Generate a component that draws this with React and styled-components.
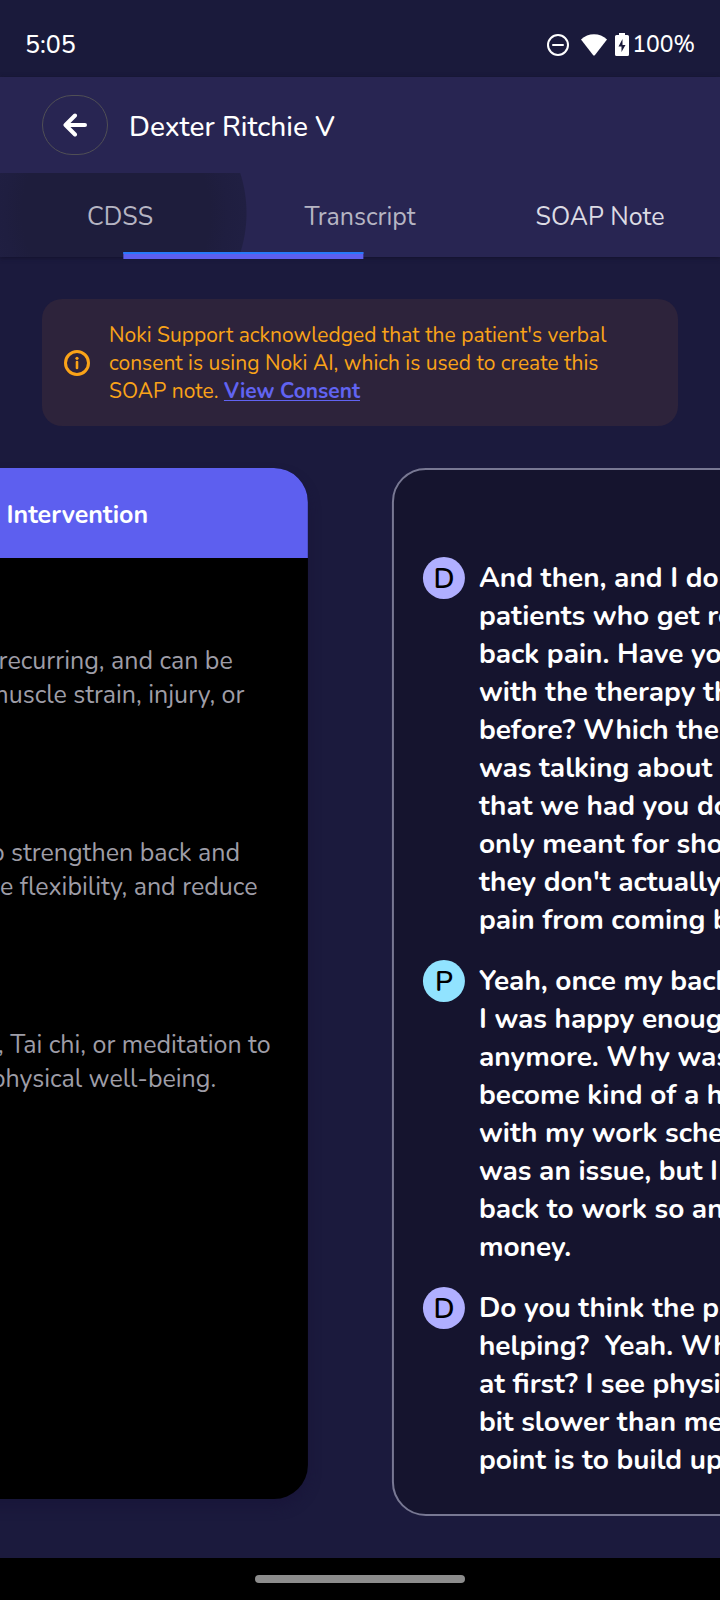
import React from "react";
import styled, { createGlobalStyle } from "styled-components";

const swipe = 0.514;

const GlobalStyle = createGlobalStyle`
  * { box-sizing: border-box; }
  body { margin: 0; background: #1b1a3d; }
  button { font: inherit; color: inherit; background: none; border: 0; padding: 0; cursor: pointer; }
  h1, h2, h3, p { margin: 0; }
`;

const Screen = styled.div`
  display: flex;
  flex-direction: column;
  min-height: 100vh;
  background: #1b1a3d;
  color: #fff;
  font-family: Nunito, Lato, "Open Sans", sans-serif;
  overflow: hidden;
`;

const StatusBar = styled.div`
  display: flex;
  align-items: center;
  justify-content: space-between;
  height: 77px;
  padding: 12px 25px 0;
  background: #1a1a3b;
  font-size: 25px;
  line-height: 30px;
  font-weight: 500;
`;

const StatusIcons = styled.div`
  display: flex;
  align-items: center;
`;

const BatteryLevel = styled.span`
  font-size: 23px;
`;

const StatusIcon = styled.svg`
  display: block;
  margin-right: ${(p) => p.$gap}px;
`;

const Header = styled.header`
  background: #282552;
  box-shadow: 0 1px 4px #14122c;
  position: relative;
`;

const AppBar = styled.div`
  display: flex;
  align-items: center;
  gap: 21px;
  height: 96px;
  padding: 0 42px;
`;

const BackButton = styled.button`
  display: flex;
  align-items: center;
  justify-content: center;
  width: 66px;
  height: 60px;
  border: 1px solid #504f55;
  border-radius: 30px;
`;

const PatientName = styled.h1`
  padding-top: 4px;
  font-size: 28px;
  line-height: 36px;
  font-weight: 500;
`;

const Tabs = styled.nav`
  position: relative;
  display: grid;
  grid-template-columns: repeat(3, 1fr);
  height: 84px;
`;

const Tab = styled.button`
  position: relative;
  font-size: 25px;
  line-height: 32px;
  padding-top: 4px;
  color: ${(p) => (p.$bright ? "#dcdbe3" : "#b6b5c3")};
`;

const TabLabel = styled.span`
  position: relative;
`;

const Ripple = styled.span`
  position: absolute;
  inset: 0 -8px 0 0;
  background: radial-gradient(
    circle at 116px 40px,
    #1e1d3c 0 94px,
    #1f1e40 112px,
    #201f42 130px,
    transparent 131px
  );
`;

const Indicator = styled.span`
  position: absolute;
  left: 0;
  bottom: -2px;
  width: calc(100% / 3);
  height: 7px;
  background: #5d5fef;
  border-top: 2px solid #2879fa;
`;

const Banner = styled.section`
  display: flex;
  align-items: center;
  gap: 18px;
  margin: 42px;
  padding: 22px 21px 21px;
  border-radius: 20px;
  background: #2d233b;
  color: #faa318;
`;

const InfoIcon = styled.svg`
  flex: none;
`;

const BannerText = styled.p`
  font-size: 21px;
  line-height: 28px;
`;

const ConsentLink = styled.a`
  color: #6163f2;
  font-weight: 700;
  text-decoration: underline;
  text-decoration-thickness: 1px;
  text-underline-offset: 2px;
`;

const Pager = styled.main`
  flex: 1;
  display: flex;
  padding-bottom: 42px;
`;

const Page = styled.div`
  display: flex;
  flex: 0 0 100%;
  min-width: 0;
  padding: 0 42px;
`;

const InterventionCard = styled.article`
  flex: 1;
  margin-bottom: 17px;
  border-radius: 34px;
  background: #000;
  overflow: hidden;
  box-shadow: 0 8px 12px #19163a;
`;

const CardTitle = styled.h2`
  padding: 29px 0 25px;
  background: #5d5fef;
  font-size: 25px;
  line-height: 36px;
  font-weight: 700;
  text-align: center;
`;

const Advice = styled.section`
  padding: 36px 0 0 49px;
  & + & { padding-top: 74px; }
`;

const AdviceTitle = styled.h3`
  font-size: 25px;
  line-height: 34px;
  font-weight: 700;
  margin-bottom: 16px;
`;

const AdviceLine = styled.p`
  font-size: 25px;
  line-height: 34px;
  color: #9e9da7;
  white-space: pre;
`;

const TranscriptCard = styled.article`
  flex: 1;
  min-width: 0;
  display: flex;
  flex-direction: column;
  gap: 21px;
  padding: 87px 29px 35px;
  border: 2px solid #787893;
  border-radius: 34px;
  background: #15142e;
  overflow: hidden;
`;

const Turn = styled.section`
  display: flex;
  align-items: flex-start;
  gap: 14px;
`;

const Speaker = styled.span`
  flex: none;
  width: 42px;
  height: 42px;
  border-radius: 50%;
  background: ${(p) => (p.$who === "D" ? "#b0afff" : "#91e3ff")};
  color: #000;
  font-size: 28px;
  line-height: 44px;
  font-weight: 600;
  text-align: center;
`;

const Speech = styled.p`
  padding-top: 2px;
  font-size: 28px;
  line-height: 38px;
  font-weight: 700;
  white-space: pre;
`;

const NavBar = styled.footer`
  display: flex;
  align-items: center;
  justify-content: center;
  height: 42px;
  background: #000;
`;

const HomeHandle = styled.span`
  width: 210px;
  height: 8px;
  border-radius: 4px;
  background: #8c8c8c;
`;

const advice = [
  {
    title: "Back Pain",
    lines: ["Lower back pain is often recurring, and can be", "caused by an event like muscle strain, injury, or"],
  },
  {
    title: "Exercise",
    lines: ["Begin physical therapy to strengthen back and", "key core muscles, improve flexibility, and reduce"],
  },
  {
    title: "Mind and Body",
    lines: ["Techniques such as yoga, Tai chi, or meditation to", "support the mental and physical well-being."],
  },
];

const turns = [
  {
    who: "D",
    lines: [
      "And then, and I do see",
      "patients who get recurring",
      "back pain. Have you done",
      "with the therapy that",
      "before? Which the doctor",
      "was talking about and",
      "that we had you do is",
      "only meant for short",
      "they don't actually stop",
      "pain from coming back.",
    ],
  },
  {
    who: "P",
    lines: [
      "Yeah, once my back felt",
      "I was happy enough not",
      "anymore. Why was it",
      "become kind of a hassle",
      "with my work schedule",
      "was an issue, but I got",
      "back to work so and",
      "money.",
    ],
  },
  {
    who: "D",
    lines: [
      "Do you think the pain",
      "helping?  Yeah. What",
      "at first? I see physical",
      "bit slower than medicine",
      "point is to build up your",
    ],
  },
];

export default function App() {
  return (
    <Screen>
      <GlobalStyle />
      <StatusBar>
        <span>5:05</span>
        <StatusIcons>
          <StatusIcon $gap={12} width="22" height="22" viewBox="0 0 22 22" aria-hidden="true">
            <circle cx="11" cy="11" r="10" fill="none" stroke="#fff" strokeWidth="2" />
            <path d="M6 11h10" stroke="#fff" strokeWidth="2" strokeLinecap="round" />
          </StatusIcon>
          <StatusIcon $gap={8} width="26" height="22" viewBox="0 0 26 22" aria-hidden="true">
            <path d="M0 5.5C7-1.6 19-1.6 26 5.5L13.8 21.2Q13 22 12.200 21.200Z" fill="#fff" />
          </StatusIcon>
          <StatusIcon $gap={3} width="14" height="23" viewBox="0 0 14 23" aria-hidden="true">
            <path d="M4 0h6v2h2.500Q14 2 14 3.500V21.500Q14 23 12.500 23H1.500Q0 23 0 21.500V3.500Q0 2 1.500 2H4Z" fill="#fff" />
            <path d="M7.500 6v6H10.500L6.500 19V13.500H3.500Z" fill="#1a1a3b" />
          </StatusIcon>
          <BatteryLevel>100%</BatteryLevel>
        </StatusIcons>
      </StatusBar>

      <Header>
        <AppBar>
          <BackButton type="button" aria-label="Back">
            <svg width="24" height="24" viewBox="0 0 24 24" aria-hidden="true">
              <path d="M22 12H3M12 2.500L2.500 12L12 21.500" fill="none" stroke="#fff" strokeWidth="4" strokeLinecap="round" strokeLinejoin="round" />
            </svg>
          </BackButton>
          <PatientName>Dexter Ritchie V</PatientName>
        </AppBar>
        <Tabs>
          <Tab type="button">
            <Ripple />
            <TabLabel>CDSS</TabLabel>
          </Tab>
          <Tab type="button">Transcript</Tab>
          <Tab type="button" $bright>SOAP Note</Tab>
          <Indicator style={{ transform: `translateX(${swipe * 100}%)` }} />
        </Tabs>
      </Header>

      <Banner>
        <InfoIcon width="28" height="28" viewBox="0 0 28 28" aria-hidden="true">
          <circle cx="14" cy="14" r="11.500" fill="none" stroke="#faa318" strokeWidth="3" />
          <path d="M14 13v6" stroke="#faa318" strokeWidth="2.600" strokeLinecap="round" />
          <circle cx="14" cy="9.300" r="1.600" fill="#faa318" />
        </InfoIcon>
        <BannerText>
          Noki Support acknowledged that the patient's verbal
          <br />
          consent is using Noki AI, which is used to create this
          <br />
          SOAP note. <ConsentLink href="#consent">View Consent</ConsentLink>
        </BannerText>
      </Banner>

      <Pager style={{ transform: `translateX(${-swipe * 100}%)` }}>
        <Page>
          <InterventionCard>
            <CardTitle>Non-operative Intervention</CardTitle>
            {advice.map((item) => (
              <Advice key={item.title}>
                <AdviceTitle>{item.title}</AdviceTitle>
                {item.lines.map((line) => (
                  <AdviceLine key={line}>{line}</AdviceLine>
                ))}
              </Advice>
            ))}
          </InterventionCard>
        </Page>
        <Page>
          <TranscriptCard>
            {turns.map((turn, i) => (
              <Turn key={i}>
                <Speaker $who={turn.who}>{turn.who}</Speaker>
                <Speech>{turn.lines.join("\n")}</Speech>
              </Turn>
            ))}
          </TranscriptCard>
        </Page>
      </Pager>

      <NavBar>
        <HomeHandle />
      </NavBar>
    </Screen>
  );
}
